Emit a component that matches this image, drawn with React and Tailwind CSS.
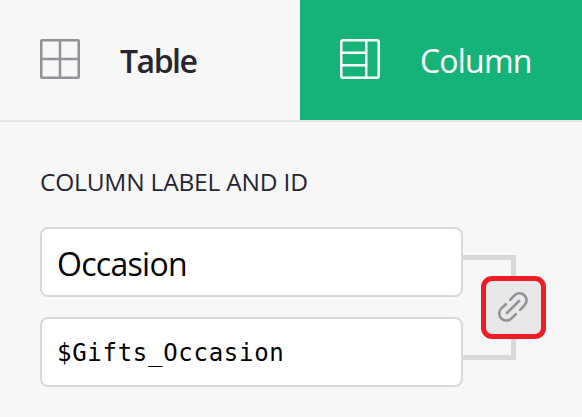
function TableIcon() {
  return (
    <svg width="40" height="40" viewBox="0 0 40 40" fill="none" stroke="#929299" strokeWidth="2.5">
      <rect x="1.25" y="1.25" width="37.5" height="37.5" rx="0.8" />
      <path d="M20 1V39M1 20H39" />
    </svg>
  );
}

function ColumnIcon() {
  return (
    <svg width="40" height="40" viewBox="0 0 40 40" fill="none" stroke="#fff" strokeWidth="2.5">
      <rect x="1.25" y="1.25" width="37.5" height="37.5" rx="2" />
      <path d="M26.25 1V39M1 13.75H26M1 26.25H26" />
    </svg>
  );
}

function LinkIcon() {
  return (
    <svg className="mr-px mb-px shrink-0" width="32" height="32" viewBox="0 0 32 32" fill="none" stroke="#929299" strokeWidth="2.6" strokeLinecap="round" strokeLinejoin="round">
      <path d="M10 22L22 10" />
      <path d="M13.2 8.8L17.4 4.4A6.9 6.9 0 0 1 27.6 14.2L23.2 18.8" />
      <path d="M8.8 13.2L4.4 17.4A6.9 6.9 0 0 0 14.2 27.6L18.8 23.2" />
    </svg>
  );
}

export default function App() {
  return (
    <div className="h-[417px] w-[582px] overflow-hidden bg-[#f7f7f7] font-['Open_Sans','Noto_Sans',sans-serif] text-[#262633]">
      <header className="flex h-[122px] border-b-2 border-[#e4e4e4]">
        <div className="flex w-[300px] items-center gap-10 pl-10 pb-0.5">
          <TableIcon />
          <span className="pt-1 text-[32px] leading-10 font-semibold tracking-[-1.5px]">Table</span>
        </div>
        <div className="flex flex-1 items-center gap-10 bg-[#16b378] pl-10 pb-0.5 text-white">
          <ColumnIcon />
          <span className="pt-1 text-[32px] leading-10 tracking-[-0.8px]">Column</span>
        </div>
      </header>
      <main className="pt-[42px] pl-10">
        <h2 className="h-9 text-[24.5px] leading-9 whitespace-nowrap tracking-[-0.2px]">COLUMN LABEL AND ID</h2>
        <div className="mt-[27px] flex">
          <div className="flex w-[423px] flex-col gap-5">
            <div className="flex h-[70px] items-center rounded-lg border-2 border-[#d9d9d9] bg-white pl-[15px] pt-1 text-[32px] tracking-[-0.7px] text-black">
              Occasion
            </div>
            <div className="flex h-[70px] items-center rounded-lg border-2 border-[#d9d9d9] bg-white pl-[15px] pt-px font-['DejaVu_Sans_Mono',monospace] text-[24px] tracking-[0.72px] text-black">
              $Gifts_Occasion
            </div>
          </div>
          <div className="relative mt-7 h-[105px] w-[53px] border-y-[5px] border-r-[5px] border-[#d9d9d9]">
            <button className="absolute top-4 left-[18px] flex h-[63px] w-[65px] items-center justify-center rounded-[11px] border-[5px] border-[#ee1c25] bg-[#e8e8e8]">
              <LinkIcon />
            </button>
          </div>
        </div>
      </main>
    </div>
  );
}
